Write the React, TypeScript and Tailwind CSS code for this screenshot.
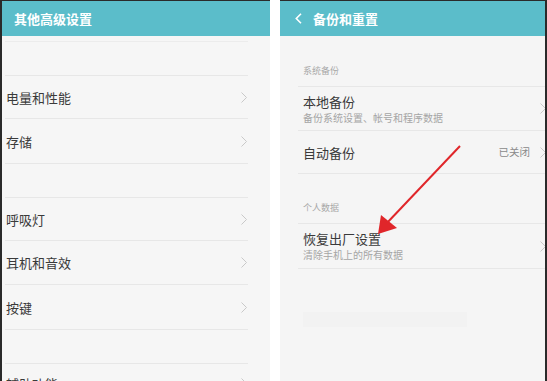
import React from "react";

const font = { fontFamily: '"Noto Sans CJK SC", "Noto Sans", sans-serif' };

function Chevron({ className = "" }: { className?: string }) {
  return (
    <svg width="6" height="11" viewBox="0 0 6 11" className={className}>
      <polyline points="0.5,0.5 5.5,5.5 0.5,10.5" fill="none" stroke="#c9c9c9" strokeWidth="1" />
    </svg>
  );
}

function LeftRow({ label, h }: { label: string; h: string }) {
  return (
    <div className={`${h} shrink-0 flex items-center justify-between border-b border-[#e7e7e7] pl-[1px] pr-[1px]`}>
      <span className="text-[13px] text-[#3a3a3a] leading-none">{label}</span>
      <Chevron />
    </div>
  );
}

function LeftPanel() {
  return (
    <section className="w-[270px] h-full flex flex-col bg-[#f6f6f6] border-l-2 border-t border-[#2a2a2a] shrink-0 overflow-hidden">
      <header className="h-[35px] shrink-0 bg-[#5bbdca] flex items-center pl-[12px]">
        <h1 className="text-[13px] font-bold text-white">其他高级设置</h1>
      </header>
      <div className="flex flex-col shrink-0 pl-[3px] pr-[22px]">
        <div className="h-[6px] shrink-0 border-b border-[#ececec]" />
        <div className="h-[34px] shrink-0 border-b border-[#e7e7e7]" />
        <LeftRow label="电量和性能" h="h-[43px]" />
        <LeftRow label="存储" h="h-[45px]" />
        <div className="h-[34px] shrink-0 border-b border-[#e7e7e7]" />
        <LeftRow label="呼吸灯" h="h-[43px]" />
        <LeftRow label="耳机和音效" h="h-[44px]" />
        <LeftRow label="按键" h="h-[45px]" />
        <div className="h-[34px] shrink-0 border-b border-[#e7e7e7]" />
        <LeftRow label="辅助功能" h="h-[40px]" />
      </div>
    </section>
  );
}

function SectionLabel({ label, h }: { label: string; h: string }) {
  return (
    <div className={`${h} shrink-0 flex items-end pb-[9px] pl-[5px] border-b border-[#e7e7e7]`}>
      <span className="text-[9px] leading-[12px] text-[#a8a8a8]">{label}</span>
    </div>
  );
}

function RightRow({ title, sub, value, h }: { title: string; sub?: string; value?: string; h: string }) {
  return (
    <div className={`${h} shrink-0 flex items-center justify-between border-b border-[#e7e7e7] pl-[5px]`}>
      <div className="flex flex-col">
        <span className="text-[13px] leading-[17px] text-[#3a3a3a]">{title}</span>
        {sub && <span className="text-[10px] leading-[15px] text-[#a5a5a5]">{sub}</span>}
      </div>
      <div className="flex items-center gap-[10px] -mr-[1px]">
        {value && <span className="text-[10.5px] text-[#8a8a8a]">{value}</span>}
        <Chevron />
      </div>
    </div>
  );
}

function RightPanel() {
  return (
    <section className="flex-1 h-full flex flex-col bg-[#f5f5f5] border-r-2 border-t border-[#2a2a2a] overflow-hidden">
      <header className="h-[35px] shrink-0 bg-[#5bbdca] flex items-center pl-[15px] gap-[11px]">
        <svg width="7" height="11" viewBox="0 0 7 11">
          <polyline points="6,0.8 1.3,5.5 6,10.2" fill="none" stroke="#fff" strokeWidth="1.6" />
        </svg>
        <h1 className="text-[13px] font-bold text-white">备份和重置</h1>
      </header>
      <div className="flex flex-col pl-[18px]">
        <SectionLabel label="系统备份" h="h-[51px]" />
        <RightRow title="本地备份" sub="备份系统设置、帐号和程序数据" h="h-[44px]" />
        <RightRow title="自动备份" value="已关闭" h="h-[43px]" />
        <SectionLabel label="个人数据" h="h-[50px]" />
        <RightRow title="恢复出厂设置" sub="清除手机上的所有数据" h="h-[45px]" />
        <div className="mt-[43px] ml-[5px] w-[164px] h-[15px] bg-[#f2f2f2]" />
      </div>
    </section>
  );
}

export default function App() {
  return (
    <div className="relative w-[547px] h-[381px] overflow-hidden bg-white flex gap-[10px]" style={font}>
      <LeftPanel />
      <RightPanel />
      <svg className="absolute inset-0 pointer-events-none" width="547" height="381" viewBox="0 0 547 381">
        <line x1="460" y1="146" x2="386" y2="224" stroke="#e0262a" strokeWidth="2" />
        <polygon points="378,234 381,215 397,228" fill="#e0262a" />
      </svg>
    </div>
  );
}
